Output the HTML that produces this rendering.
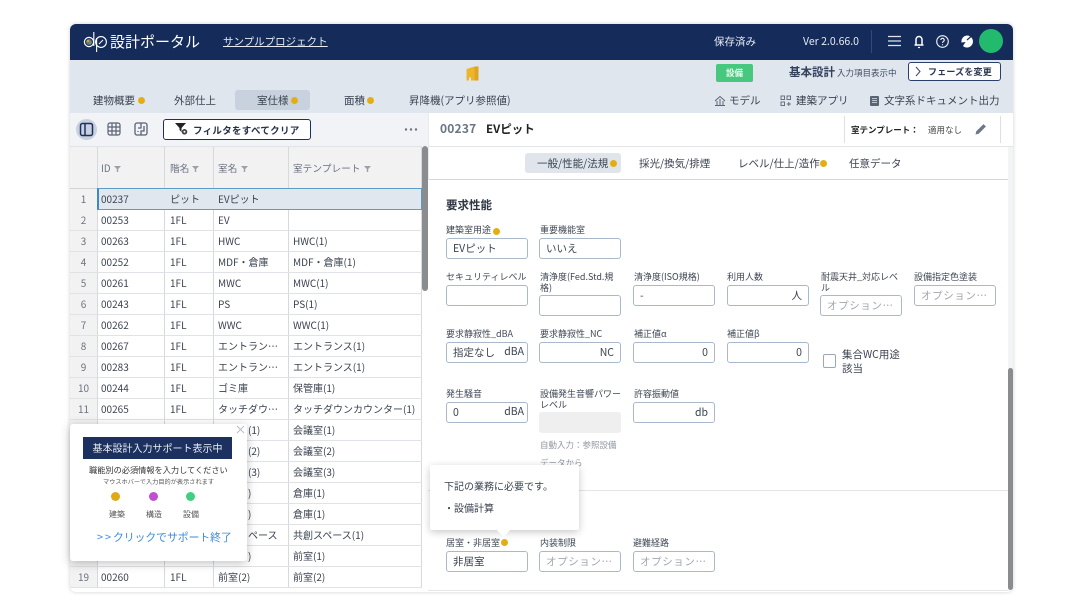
<!DOCTYPE html>
<html lang="ja"><head><meta charset="utf-8"><title>設計ポータル</title>
<style>
html,body{margin:0;padding:0;background:#fff}
body{width:1075px;height:609px;position:relative;overflow:hidden;font-family:"Noto Sans CJK JP","Liberation Sans",sans-serif;color:#3a4250;font-size:10px}
div,span.a,svg{position:absolute;box-sizing:border-box}
.t{position:absolute;white-space:nowrap;line-height:14px;height:14px}
.d{position:absolute;width:7px;height:7px;border-radius:50%;background:#e3ae14}
.h{position:absolute;left:70px;width:352px;height:1px;background:#dfe2e6}
.v{position:absolute;width:1px;background:#d6d9dd}
.n{left:70px;width:27px;text-align:center;color:#6b7280;font-size:10px}
.c1{left:101px}.c2{left:170px}.c3{left:218px}.c4{left:293px}
.lb{position:absolute;font-size:9px;line-height:10.5px;color:#3f4754;width:84px}
.in{position:absolute;width:82px;height:21px;border:1px solid #a9b8cb;border-radius:3px;background:#fff;font-size:10.5px;line-height:19px;padding:0 6px;color:#3a4250;white-space:nowrap}
.ph{color:#a2a7af;letter-spacing:.6px}
.r{text-align:right}
</style></head><body>
<div style="left:70px;top:24px;width:943px;height:568px;background:#fff;border-radius:6px;box-shadow:0 0 4px rgba(0,0,0,.18);overflow:hidden">
 <div style="left:0;top:0;width:943px;height:36px;background:#152c5b"></div>
 <div style="left:0;top:36px;width:943px;height:53px;background:#e0e6ee"></div>
 <div style="left:0;top:89px;width:358px;height:33px;background:#f1f3f7"></div>
 <div style="left:0;top:122px;width:352px;height:42px;background:#f2f2f3"></div>
 <div style="left:0;top:122px;width:27px;height:442px;background:#f2f2f3"></div>
</div>

<!-- logo -->
<svg style="left:81px;top:29px" width="30" height="26" viewBox="0 0 30 26" fill="none"><circle cx="8" cy="13" r="4.6" stroke="#fff" stroke-width="1.2"/><circle cx="8" cy="13" r="3" fill="#6b6f78"/><circle cx="7" cy="12" r="1.3" fill="#d8a62a"/><circle cx="9.3" cy="14" r="1.2" fill="#3fae70"/><path d="M12.8 3V17" stroke="#fff" stroke-width="1.1"/><path d="M15.6 9V23" stroke="#fff" stroke-width="1.1"/><circle cx="20" cy="13" r="5.4" stroke="#fff" stroke-width="1.1"/><path d="M18 15l4-4" stroke="#fff" stroke-width="1"/></svg>
<span class="t" style="left:110px;top:33px;font-size:15px;line-height:18px;height:18px;color:#fff">設計ポータル</span>
<span class="t" style="left:223px;top:35px;font-size:10.500px;color:#e6ebf4;text-decoration:underline">サンプルプロジェクト</span>
<span class="t" style="left:714px;top:35px;color:#e6ebf4;font-size:10.500px">保存済み</span>
<span class="t" style="left:803px;top:35px;color:#e6ebf4;font-size:10.500px">Ver 2.0.66.0</span>
<div style="left:871px;top:30px;width:1px;height:23px;background:#34497a"></div>
<svg style="left:886px;top:34px" width="16" height="14" viewBox="0 0 16 14" stroke="#dfe4ec" stroke-width="1.300"><path d="M2 2.500H15M2 7H15M2 11.500H15"/></svg>
<svg style="left:911px;top:34px" width="16" height="15" viewBox="0 0 16 15" fill="none" stroke="#fff" stroke-width="1.500"><path d="M5 10.500V5.500a3 3 0 0 1 6 0v5M3.500 11H12.500"/><path d="M7 13.500h2" stroke-width="1.200"/></svg>
<svg style="left:935px;top:34px" width="15" height="15" viewBox="0 0 15 15" fill="none" stroke="#eef1f6" stroke-width="1.100"><circle cx="7.500" cy="7.500" r="5.800"/><path d="M5.800 6a1.700 1.700 0 1 1 2.500 1.500C7.700 8 7.500 8.300 7.500 9M7.500 10.300v1"/></svg>
<svg style="left:959px;top:34px" width="16" height="15" viewBox="0 0 16 15"><path d="M8 1.500A6 6 0 1 1 4 12L6.500 8 2.500 8.500A6 6 0 0 1 8 1.500Z" fill="#fff"/><path d="M8 6L12 2.500" stroke="#152c5b" stroke-width="1.200"/></svg>
<div style="left:979px;top:29px;width:24px;height:24px;border-radius:50%;background:#22bb6d"></div>

<!-- subnav -->
<svg style="left:465px;top:66px" width="15" height="15" viewBox="0 0 15 15"><path d="M1.500 3L9.500 .5V14.500H6V11.500H4V14.500H1.500Z" fill="#ecb52b"/><path d="M9.500 .5h4V14.500h-4z" fill="#dfa51f"/></svg>
<div style="left:716px;top:64px;width:37px;height:18px;border-radius:2px;background:#46c97f;color:#e9fbf1;font-size:8.500px;font-weight:bold;line-height:18px;text-align:center">設備</div>
<span class="t" style="left:789px;top:65px;font-size:11.500px;font-weight:bold;color:#33415c">基本設計</span>
<span class="t" style="left:837px;top:66px;font-size:8.500px;color:#3f4c63">入力項目表示中</span>
<div style="left:908px;top:62px;width:93px;height:19px;background:#fff;border:1px solid #2a3f6e;border-radius:3px"></div>
<svg style="left:914px;top:66px" width="8" height="11" viewBox="0 0 8 11" fill="none" stroke="#3a4660"><path d="M2 1l4 4.500-4 4.500"/></svg>
<span class="t" style="left:928px;top:65px;font-size:9px;font-weight:bold;letter-spacing:.2px;color:#2a3650">フェーズを変更</span>

<span class="t" style="left:93px;top:94px;font-size:10.500px">建物概要</span><span class="d" style="left:138px;top:97px"></span>
<span class="t" style="left:174px;top:94px;font-size:10.500px">外部仕上</span>
<div style="left:235px;top:90px;width:75px;height:20px;background:#c8d1de;border-radius:3px"></div>
<span class="t" style="left:257px;top:94px;font-size:10.500px">室仕様</span><span class="d" style="left:291px;top:97px"></span>
<span class="t" style="left:344px;top:94px;font-size:10.500px">面積</span><span class="d" style="left:367px;top:97px"></span>
<span class="t" style="left:409px;top:94px;font-size:10.500px">昇降機(アプリ参照値)</span>

<svg style="left:714px;top:95px" width="12" height="12" viewBox="0 0 12 12" fill="none" stroke="#5a6473"><path d="M1 6L6 1.500 11 6M3 6v4.500h6V6M1 10.500h10M6 4v6"/></svg>
<span class="t" style="left:729px;top:94px;font-size:10.500px">モデル</span>
<svg style="left:780px;top:95px" width="12" height="12" viewBox="0 0 12 12" fill="none" stroke="#5a6473" stroke-width=".9"><rect x="1" y="1" width="3.500" height="3.500"/><rect x="7" y="1" width="3.500" height="3.500"/><rect x="1" y="7" width="3.500" height="3.500"/><path d="M8.800 7v4M6.800 9h4"/></svg>
<span class="t" style="left:796px;top:94px;font-size:10.500px">建築アプリ</span>
<svg style="left:869px;top:95px" width="11" height="12" viewBox="0 0 11 12"><rect x="1" y="1" width="9" height="10" rx="1" fill="#5a6473"/><path d="M3 3.500h5M3 5.500h5M3 7.500h5" stroke="#e0e6ee" stroke-width=".7"/></svg>
<span class="t" style="left:884px;top:94px;font-size:10.500px">文字系ドキュメント出力</span>

<!-- toolbar -->
<div style="left:76px;top:119px;width:21px;height:21px;border-radius:50%;background:#c8d1e0"></div>
<svg style="left:79px;top:122px" width="15" height="15" viewBox="0 0 15 15" fill="none" stroke="#1c3160" stroke-width="1.500"><rect x="1.500" y="1.500" width="12" height="12" rx="2"/><path d="M6 1.500v12"/></svg>
<svg style="left:107px;top:122px" width="14" height="14" viewBox="0 0 14 14" fill="none" stroke="#596273" stroke-width="1.200"><rect x="1" y="1" width="12" height="12" rx="2"/><path d="M5 1v12M9 1v12M1 5h12M1 9h12"/></svg>
<svg style="left:134px;top:122px" width="14" height="14" viewBox="0 0 14 14" fill="none" stroke="#596273" stroke-width="1.300"><rect x="1" y="1" width="12" height="12" rx="2"/><path d="M7 1v5H4M10 4v5H7v4M4 9v1"/></svg>
<div style="left:163px;top:119px;width:148px;height:21px;background:#fff;border:1px solid #1c3160;border-radius:3px"></div>
<svg style="left:175px;top:123px" width="14" height="13" viewBox="0 0 14 13"><path d="M0 0H11L6.500 5V9L4.500 7V5Z" fill="#222"/><circle cx="9.500" cy="8.800" r="2.800" fill="#444"/><circle cx="9.500" cy="8.800" r="1" fill="#fff"/></svg>
<span class="t" style="left:193px;top:123px;font-size:9.500px;font-weight:bold;letter-spacing:.3px;color:#273247">フィルタをすべてクリア</span>
<svg style="left:404px;top:127px" width="14" height="5" viewBox="0 0 14 5" fill="#6b7280"><circle cx="2" cy="2.500" r="1.200"/><circle cx="7" cy="2.500" r="1.200"/><circle cx="12" cy="2.500" r="1.200"/></svg>

<!-- grid -->
<div class="v" style="left:97px;top:146px;height:442px"></div>
<div class="v" style="left:164px;top:146px;height:442px"></div>
<div class="v" style="left:213px;top:146px;height:442px"></div>
<div class="v" style="left:288px;top:146px;height:442px"></div>
<div class="v" style="left:421px;top:146px;height:442px"></div>
<div class="h" style="top:146px"></div>
<div style="left:97px;top:188px;width:325px;height:22px;background:#e1e7ef;border:1px solid #5e9cc8;border-left:2px solid #3f8ac0"></div>
<div class="h" style="top:188px;background:#cfd3d8;width:27px"></div>
<div class="h" style="top:230px"></div><div class="h" style="top:251px"></div><div class="h" style="top:272px"></div><div class="h" style="top:293px"></div><div class="h" style="top:314px"></div><div class="h" style="top:335px"></div><div class="h" style="top:356px"></div><div class="h" style="top:377px"></div><div class="h" style="top:398px"></div><div class="h" style="top:419px"></div><div class="h" style="top:440px"></div><div class="h" style="top:461px"></div><div class="h" style="top:482px"></div><div class="h" style="top:503px"></div><div class="h" style="top:524px"></div><div class="h" style="top:545px"></div><div class="h" style="top:566px"></div><div class="h" style="top:587px"></div>
<div style="left:422px;top:146px;width:6px;height:145px;background:#8a8c90;border-radius:3px"></div>

<span class="t" style="left:101px;top:161px;font-size:9.700px;color:#6b7280">ID</span><svg style="left:114px;top:166px" width="7" height="6" viewBox="0 0 7 6" fill="#9aa0a9"><path d="M0 0H7L4.200 3V6H2.800V3Z"/></svg>
<span class="t" style="left:170px;top:161px;font-size:9.700px;color:#6b7280">階名</span><svg style="left:192px;top:166px" width="7" height="6" viewBox="0 0 7 6" fill="#9aa0a9"><path d="M0 0H7L4.200 3V6H2.800V3Z"/></svg>
<span class="t" style="left:218px;top:161px;font-size:9.700px;color:#6b7280">室名</span><svg style="left:241px;top:166px" width="7" height="6" viewBox="0 0 7 6" fill="#9aa0a9"><path d="M0 0H7L4.200 3V6H2.800V3Z"/></svg>
<span class="t" style="left:293px;top:161px;font-size:9.700px;color:#6b7280">室テンプレート</span><svg style="left:364px;top:166px" width="7" height="6" viewBox="0 0 7 6" fill="#9aa0a9"><path d="M0 0H7L4.200 3V6H2.800V3Z"/></svg>

<span class="t n" style="top:192px">1</span><span class="t c1" style="top:192px">00237</span><span class="t c2" style="top:192px">ピット</span><span class="t c3" style="top:192px">EVピット</span>
<span class="t n" style="top:213px">2</span><span class="t c1" style="top:213px">00253</span><span class="t c2" style="top:213px">1FL</span><span class="t c3" style="top:213px">EV</span>
<span class="t n" style="top:234px">3</span><span class="t c1" style="top:234px">00263</span><span class="t c2" style="top:234px">1FL</span><span class="t c3" style="top:234px">HWC</span><span class="t c4" style="top:234px">HWC(1)</span>
<span class="t n" style="top:255px">4</span><span class="t c1" style="top:255px">00252</span><span class="t c2" style="top:255px">1FL</span><span class="t c3" style="top:255px">MDF・倉庫</span><span class="t c4" style="top:255px">MDF・倉庫(1)</span>
<span class="t n" style="top:276px">5</span><span class="t c1" style="top:276px">00261</span><span class="t c2" style="top:276px">1FL</span><span class="t c3" style="top:276px">MWC</span><span class="t c4" style="top:276px">MWC(1)</span>
<span class="t n" style="top:297px">6</span><span class="t c1" style="top:297px">00243</span><span class="t c2" style="top:297px">1FL</span><span class="t c3" style="top:297px">PS</span><span class="t c4" style="top:297px">PS(1)</span>
<span class="t n" style="top:318px">7</span><span class="t c1" style="top:318px">00262</span><span class="t c2" style="top:318px">1FL</span><span class="t c3" style="top:318px">WWC</span><span class="t c4" style="top:318px">WWC(1)</span>
<span class="t n" style="top:339px">8</span><span class="t c1" style="top:339px">00267</span><span class="t c2" style="top:339px">1FL</span><span class="t c3" style="top:339px">エントラン…</span><span class="t c4" style="top:339px">エントランス(1)</span>
<span class="t n" style="top:360px">9</span><span class="t c1" style="top:360px">00283</span><span class="t c2" style="top:360px">1FL</span><span class="t c3" style="top:360px">エントラン…</span><span class="t c4" style="top:360px">エントランス(1)</span>
<span class="t n" style="top:381px">10</span><span class="t c1" style="top:381px">00244</span><span class="t c2" style="top:381px">1FL</span><span class="t c3" style="top:381px">ゴミ庫</span><span class="t c4" style="top:381px">保管庫(1)</span>
<span class="t n" style="top:402px">11</span><span class="t c1" style="top:402px">00265</span><span class="t c2" style="top:402px">1FL</span><span class="t c3" style="top:402px">タッチダウ…</span><span class="t c4" style="top:402px">タッチダウンカウンター(1)</span>
<span class="t c3" style="top:423px;left:248px">(1)</span><span class="t c4" style="top:423px">会議室(1)</span>
<span class="t c3" style="top:444px;left:248px">(2)</span><span class="t c4" style="top:444px">会議室(2)</span>
<span class="t c3" style="top:465px;left:248px">(3)</span><span class="t c4" style="top:465px">会議室(3)</span>
<span class="t c4" style="top:486px">倉庫(1)</span><span class="t c3" style="top:486px;left:248px">)</span>
<span class="t c4" style="top:507px">倉庫(1)</span><span class="t c3" style="top:507px;left:248px">)</span>
<span class="t c3" style="top:528px;left:248px">ペース</span><span class="t c4" style="top:528px">共創スペース(1)</span>
<span class="t c4" style="top:549px">前室(1)</span><span class="t c3" style="top:549px;left:248px">)</span>
<span class="t n" style="top:570px">19</span><span class="t c1" style="top:570px">00260</span><span class="t c2" style="top:570px">1FL</span><span class="t c3" style="top:570px">前室(2)</span><span class="t c4" style="top:570px">前室(2)</span>

<!-- support popup -->
<div style="left:70px;top:424px;width:177px;height:137px;background:#fff;box-shadow:0 2px 10px rgba(0,0,0,.25);border-radius:3px"></div>
<svg style="left:236px;top:425px" width="9" height="9" viewBox="0 0 9 9" stroke="#b9bdc4" stroke-width="1"><path d="M1 1l7 7M8 1L1 8"/></svg>
<div style="left:83px;top:437px;width:149px;height:22px;background:#1c3160;color:#e9edf4;font-size:10px;line-height:22px;text-align:center">基本設計入力サポート表示中</div>
<span class="t" style="left:89px;top:463px;font-size:8.200px;color:#333">職能別の必須情報を入力してください</span>
<span class="t" style="left:103px;top:475px;font-size:6.200px;color:#555">マウスホバーで入力目的が表示されます</span>
<span class="d" style="left:111px;top:492px;width:9px;height:9px;background:#e0aa16"></span>
<span class="d" style="left:149px;top:492px;width:9px;height:9px;background:#c04fd4"></span>
<span class="d" style="left:186px;top:492px;width:9px;height:9px;background:#3fcf82"></span>
<span class="t" style="left:109px;top:508px;font-size:8px;color:#555">建築</span>
<span class="t" style="left:146px;top:508px;font-size:8px;color:#555">構造</span>
<span class="t" style="left:183px;top:508px;font-size:8px;color:#555">設備</span>
<span class="t" style="left:97px;top:530px;font-size:10.800px;color:#3b8ad9"><span style="letter-spacing:2px">&gt;&gt;</span>クリックでサポート終了</span>

<!-- right header -->
<div style="left:428px;top:146px;width:585px;height:1px;background:#e2e5e9"></div>
<div style="left:428px;top:179px;width:585px;height:1px;background:#d5d8dc"></div>
<div style="left:428px;top:113px;width:1px;height:67px;background:#e8eaed"></div>
<span class="t" style="left:440px;top:122px;font-size:12px;font-weight:bold;color:#697484;letter-spacing:.2px">00237</span>
<span class="t" style="left:486px;top:122px;font-size:11.500px;font-weight:bold;color:#222">EVピット</span>
<div style="left:844px;top:116px;width:1px;height:27px;background:#dcdfe3"></div>
<div style="left:1000px;top:116px;width:1px;height:27px;background:#dcdfe3"></div>
<span class="t" style="left:851px;top:123px;font-size:8.500px;font-weight:bold;color:#222">室テンプレート：</span>
<span class="t" style="left:928px;top:123px;font-size:8.500px;color:#444">適用なし</span>
<svg style="left:974px;top:122px" width="14" height="14" viewBox="0 0 14 14"><path d="M1.500 12.500l.8-3.200L9.500 2.100l2.400 2.400L4.700 11.700Z" fill="#707784"/></svg>

<div style="left:525px;top:153px;width:96px;height:20px;background:#e0e5ec;border-radius:3px"></div>
<span class="t" style="left:537px;top:157px;font-size:10.500px">一般/性能/法規</span><span class="d" style="left:610px;top:160px"></span>
<span class="t" style="left:639px;top:157px;font-size:10.500px">採光/換気/排煙</span>
<span class="t" style="left:738px;top:157px;font-size:10.500px">レベル/仕上/造作</span><span class="d" style="left:820px;top:160px"></span>
<span class="t" style="left:849px;top:157px;font-size:10.500px">任意データ</span>

<!-- form -->
<span class="t" style="left:446px;top:198px;font-size:11.500px;font-weight:bold;color:#2f3744">要求性能</span>

<div class="lb" style="left:446px;top:225px;white-space:nowrap">建築室用途</div><span class="d" style="left:493px;top:228px"></span>
<div class="lb" style="left:540px;top:225px">重要機能室</div>
<div class="in" style="left:446px;top:238px">EVピット</div>
<div class="in" style="left:539px;top:238px">いいえ</div>

<div class="lb" style="left:446px;top:272px">セキュリティレベル</div>
<div class="lb" style="left:540px;top:272px">清浄度(Fed.Std.規格)</div>
<div class="lb" style="left:634px;top:272px">清浄度(ISO規格)</div>
<div class="lb" style="left:727px;top:272px">利用人数</div>
<div class="lb" style="left:821px;top:272px;width:82px">耐震天井_対応レベル</div>
<div class="lb" style="left:914px;top:272px">設備指定色塗装</div>
<div class="in" style="left:446px;top:285px"></div>
<div class="in" style="left:539px;top:295px"></div>
<div class="in" style="left:633px;top:285px">-</div>
<div class="in r" style="left:727px;top:285px">人</div>
<div class="in ph" style="left:820px;top:295px">オプション…</div>
<div class="in ph" style="left:914px;top:285px">オプション…</div>

<div class="lb" style="left:446px;top:329px">要求静寂性_dBA</div>
<div class="lb" style="left:540px;top:329px">要求静寂性_NC</div>
<div class="lb" style="left:634px;top:329px">補正値α</div>
<div class="lb" style="left:727px;top:329px">補正値β</div>
<div class="in" style="left:446px;top:342px">指定なし<span style="position:absolute;right:3px;top:-1px">dBA</span></div>
<div class="in r" style="left:539px;top:342px">NC</div>
<div class="in r" style="left:633px;top:342px">0</div>
<div class="in r" style="left:727px;top:342px">0</div>
<div style="left:823px;top:354px;width:13px;height:14px;border:1px solid #9aa7b8;border-radius:2px;background:#fff"></div>
<span class="t" style="left:842px;top:348px;font-size:10.500px">集合WC用途</span>
<span class="t" style="left:842px;top:362px;font-size:10.500px">該当</span>

<div class="lb" style="left:446px;top:389px">発生騒音</div>
<div class="lb" style="left:540px;top:389px;width:84px">設備発生音響パワーレベル</div>
<div class="lb" style="left:634px;top:389px">許容振動値</div>
<div class="in" style="left:446px;top:402px">0<span style="position:absolute;right:3px;top:-1px">dBA</span></div>
<div style="left:539px;top:412px;width:82px;height:21px;background:#efefef;border-radius:3px"></div>
<div class="in r" style="left:633px;top:402px">db</div>
<span class="t" style="left:540px;top:438px;font-size:8.500px;color:#9298a1">自動入力：参照設備</span>
<span class="t" style="left:540px;top:456px;font-size:8.500px;color:#9298a1">データから</span>

<div style="left:428px;top:490px;width:580px;height:1px;background:#e2e5e9"></div>
<div style="left:428px;top:590px;width:580px;height:1px;background:#e2e5e9"></div>

<div style="left:430px;top:465px;width:149px;height:65px;background:#fff;box-shadow:0 2px 8px rgba(0,0,0,.22);border-radius:2px"></div>
<div style="left:499px;top:526px;width:9px;height:9px;background:#fff;transform:rotate(45deg)"></div>
<span class="t" style="left:444px;top:479px;font-size:10px">下記の業務に必要です。</span>
<span class="t" style="left:444px;top:501px;font-size:10px">・設備計算</span>

<div class="lb" style="left:446px;top:538px;white-space:nowrap">居室・非居室</div><span class="d" style="left:501px;top:539px"></span>
<div class="lb" style="left:540px;top:538px">内装制限</div>
<div class="lb" style="left:633px;top:538px">避難経路</div>
<div class="in" style="left:446px;top:551px">非居室</div>
<div class="in ph" style="left:539px;top:551px">オプション…</div>
<div class="in ph" style="left:633px;top:551px">オプション…</div>

<div style="left:1008px;top:147px;width:5px;height:444px;background:#f3f4f5"></div>
<div style="left:1008px;top:368px;width:5px;height:222px;background:#8a8c90;border-radius:3px"></div>
</body></html>
